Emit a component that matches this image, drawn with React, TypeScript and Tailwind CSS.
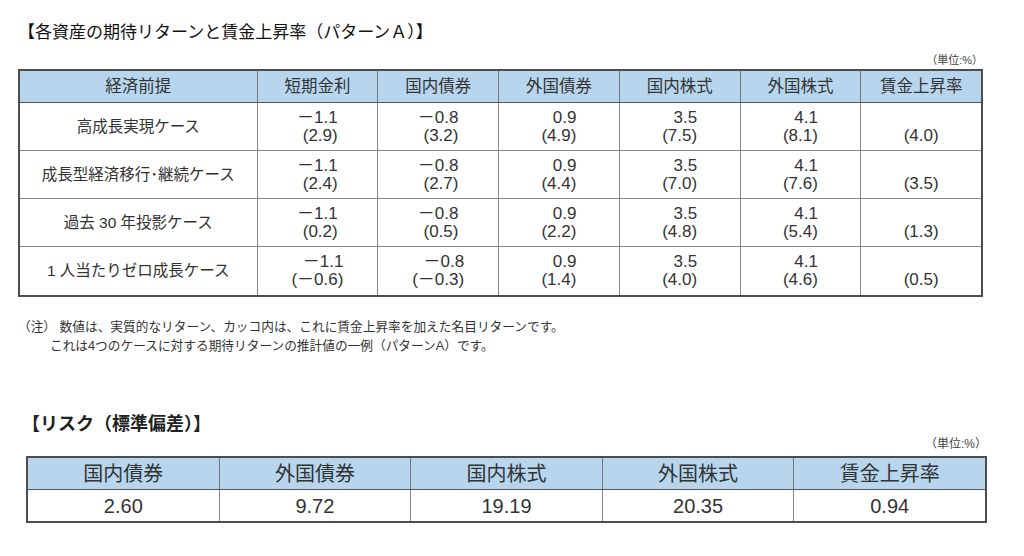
import React from "react";

const FONT = { fontFamily: '"Liberation Sans", "Noto Sans CJK JP", sans-serif' };

type Row = {
  label: string;
  values: [string, string][];
  wage: string;
};

const rows: Row[] = [
  {
    label: "高成長実現ケース",
    values: [
      ["－1.1", "(2.9)"],
      ["－0.8", "(3.2)"],
      ["0.9", "(4.9)"],
      ["3.5", "(7.5)"],
      ["4.1", "(8.1)"],
    ],
    wage: "(4.0)",
  },
  {
    label: "成長型経済移行･継続ケース",
    values: [
      ["－1.1", "(2.4)"],
      ["－0.8", "(2.7)"],
      ["0.9", "(4.4)"],
      ["3.5", "(7.0)"],
      ["4.1", "(7.6)"],
    ],
    wage: "(3.5)",
  },
  {
    label: "過去 30 年投影ケース",
    values: [
      ["－1.1", "(0.2)"],
      ["－0.8", "(0.5)"],
      ["0.9", "(2.2)"],
      ["3.5", "(4.8)"],
      ["4.1", "(5.4)"],
    ],
    wage: "(1.3)",
  },
  {
    label: "1 人当たりゼロ成長ケース",
    values: [
      ["－1.1", "(－0.6)"],
      ["－0.8", "(－0.3)"],
      ["0.9", "(1.4)"],
      ["3.5", "(4.0)"],
      ["4.1", "(4.6)"],
    ],
    wage: "(0.5)",
  },
];

const headers = ["短期金利", "国内債券", "外国債券", "国内株式", "外国株式", "賃金上昇率"];

const risk = [
  ["国内債券", "2.60"],
  ["外国債券", "9.72"],
  ["国内株式", "19.19"],
  ["外国株式", "20.35"],
  ["賃金上昇率", "0.94"],
];

function ReturnTable() {
  return (
    <div className="w-[965px] border-2 border-[#4d4d4d] text-[#333]">
      {/* header */}
      <div className="flex h-[32px] bg-[#b7d6ee] border-b border-[#555]">
        <div className="w-[237px] flex items-center justify-center text-[16.5px]">経済前提</div>
        {headers.map((h) => (
          <div
            key={h}
            className="w-[121px] border-l border-[#777] flex items-center justify-center text-[16.5px]"
          >
            {h}
          </div>
        ))}
      </div>
      {rows.map((r, i) => (
        <div
          key={r.label}
          className={`flex h-[48px] ${i < rows.length - 1 ? "border-b border-[#888]" : ""}`}
        >
          <div className="w-[237px] flex items-center justify-center text-[15.5px]">{r.label}</div>
          {r.values.map(([a, b], j) => (
            <div
              key={j}
              className="w-[121px] border-l border-[#888] flex items-center justify-center"
            >
              <div className="inline-flex flex-col items-end text-[17px] leading-[18px]">
                <span>{a}</span>
                <span>{b}</span>
              </div>
            </div>
          ))}
          <div className="w-[121px] border-l border-[#888] flex flex-col items-center justify-center text-[17px] leading-[18px]">
            <span>&nbsp;</span>
            <span>{r.wage}</span>
          </div>
        </div>
      ))}
    </div>
  );
}

function RiskTable() {
  return (
    <div className="w-[961px] border-2 border-[#4d4d4d] text-[#333]">
      <div className="flex h-[32px] bg-[#b7d6ee] border-b border-[#555]">
        {risk.map(([h], i) => (
          <div
            key={h}
            className={`flex-1 flex items-center justify-center text-[20px] ${i > 0 ? "border-l border-[#777]" : ""}`}
          >
            {h}
          </div>
        ))}
      </div>
      <div className="flex h-[31px]">
        {risk.map(([h, v], i) => (
          <div
            key={h}
            className={`flex-1 flex items-center justify-center text-[20px] ${i > 0 ? "border-l border-[#888]" : ""}`}
          >
            {v}
          </div>
        ))}
      </div>
    </div>
  );
}

export default function App() {
  return (
    <div className="w-[1024px] h-[556px] bg-white overflow-hidden" style={FONT}>
      <div className="pl-[18px] pt-[21px]">
        <h1 className="text-[17px] leading-[24px] font-normal text-[#111]">
          【各資産の期待リターンと賃金上昇率（パターンＡ）】
        </h1>
        <div className="w-[965px] mt-[8px] text-right text-[11px] leading-[14px] text-[#444]">
          （単位:%）
        </div>
        <div className="mt-[2px]">
          <ReturnTable />
        </div>
        <div className="mt-[21px] text-[12.7px] leading-[19px] text-[#333]">
          <p>（注） 数値は、実質的なリターン、カッコ内は、これに賃金上昇率を加えた名目リターンです。</p>
          <p className="pl-[32px]">これは4つのケースに対する期待リターンの推計値の一例（パターンA）です。</p>
        </div>
      </div>

      <div className="pl-[22px] mt-[55px]">
        <h2 className="text-[18px] leading-[26px] font-bold text-[#222]">【リスク（標準偏差）】</h2>
        <div className="pl-[4px]">
          <div className="w-[961px] text-right text-[12px] leading-[14px] text-[#444]">（単位:%）</div>
          <div className="mt-[5px]">
            <RiskTable />
          </div>
        </div>
      </div>
    </div>
  );
}
